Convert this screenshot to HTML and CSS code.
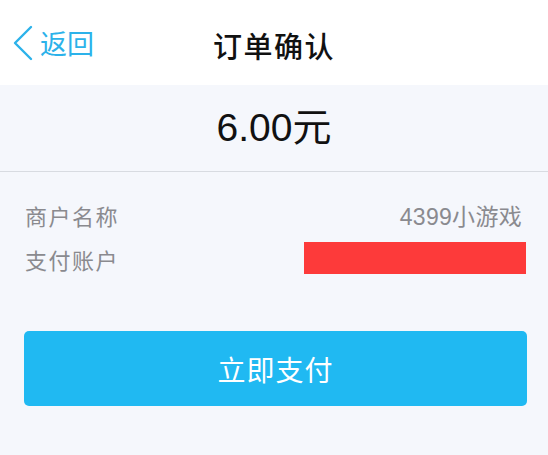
FILE: index.html
```html
<!DOCTYPE html>
<html lang="zh-CN">
<head>
<meta charset="utf-8">
<link rel="stylesheet" href="styles.css">
</head>
<body>
<header class="nav">
  <a class="back">
    <svg class="chev" width="22" height="36" viewBox="0 0 22 36"><path d="M19 2 L3 18 L19 34" fill="none" stroke="#2cb2ea" stroke-width="2.4" stroke-linecap="round" stroke-linejoin="round"/></svg>
    <span class="back-text">返回</span>
  </a>
  <h1 class="title">订单确认</h1>
</header>
<section class="amount">6.00元</section>
<section class="info">
  <div class="row"><span class="label">商户名称</span><span class="value">4399小游戏</span></div>
  <div class="row"><span class="label">支付账户</span><span class="redact"></span></div>
</section>
<div class="btn-wrap"><button class="pay">立即支付</button></div>
</body>
</html>
```
FILE: styles.css
```css
html, body {
  margin: 0;
  padding: 0;
  background: #f5f7fc;
  font-family: "Liberation Sans", "Noto Sans CJK SC", sans-serif;
}
.nav {
  position: relative;
  height: 85px;
  background: #ffffff;
  display: flex;
  align-items: center;
  justify-content: center;
}
.back {
  position: absolute;
  left: 12px;
  top: 25px;
  display: flex;
  align-items: center;
  gap: 6px;
  color: #2cb2ea;
}
.chev { display: block; }
.back-text {
  font-size: 27px;
  line-height: 36px;
  font-family: "Noto Sans CJK SC", sans-serif;
}
.title {
  margin: 0;
  font-size: 29px;
  font-weight: 500;
  color: #111;
  font-family: "Noto Sans CJK SC", sans-serif;
  letter-spacing: 1.5px;
  margin-top: 4px;
}
.amount {
  height: 87px;
  display: flex;
  align-items: center;
  justify-content: center;
  font-size: 39px;
  color: #111;
  border-bottom: 1px solid #d8dbe1;
  box-sizing: border-box;
  padding-bottom: 8px;
}
.info {
  padding-top: 21px;
}
.row {
  height: 44px;
  display: flex;
  align-items: center;
  justify-content: space-between;
  padding: 0 22px 0 25px;
}
.label {
  font-size: 22px;
  color: #8a8a8f;
  font-family: "Noto Sans CJK SC", sans-serif;
  letter-spacing: 1.5px;
}
.value {
  font-size: 23px;
  color: #8a8a8f;
  padding-right: 4px;
  letter-spacing: 0.3px;
}
.redact {
  width: 222px;
  height: 32px;
  background: #fd3a3a;
  margin-top: -2px;
}
.btn-wrap {
  padding: 50px 21px 0 24px;
}
.pay {
  display: block;
  width: 100%;
  height: 75px;
  border: none;
  border-radius: 5px;
  background: #20b9f2;
  color: #ffffff;
  font-size: 28px;
  font-family: "Noto Sans CJK SC", sans-serif;
  letter-spacing: 1px;
  padding: 0;
}
```
